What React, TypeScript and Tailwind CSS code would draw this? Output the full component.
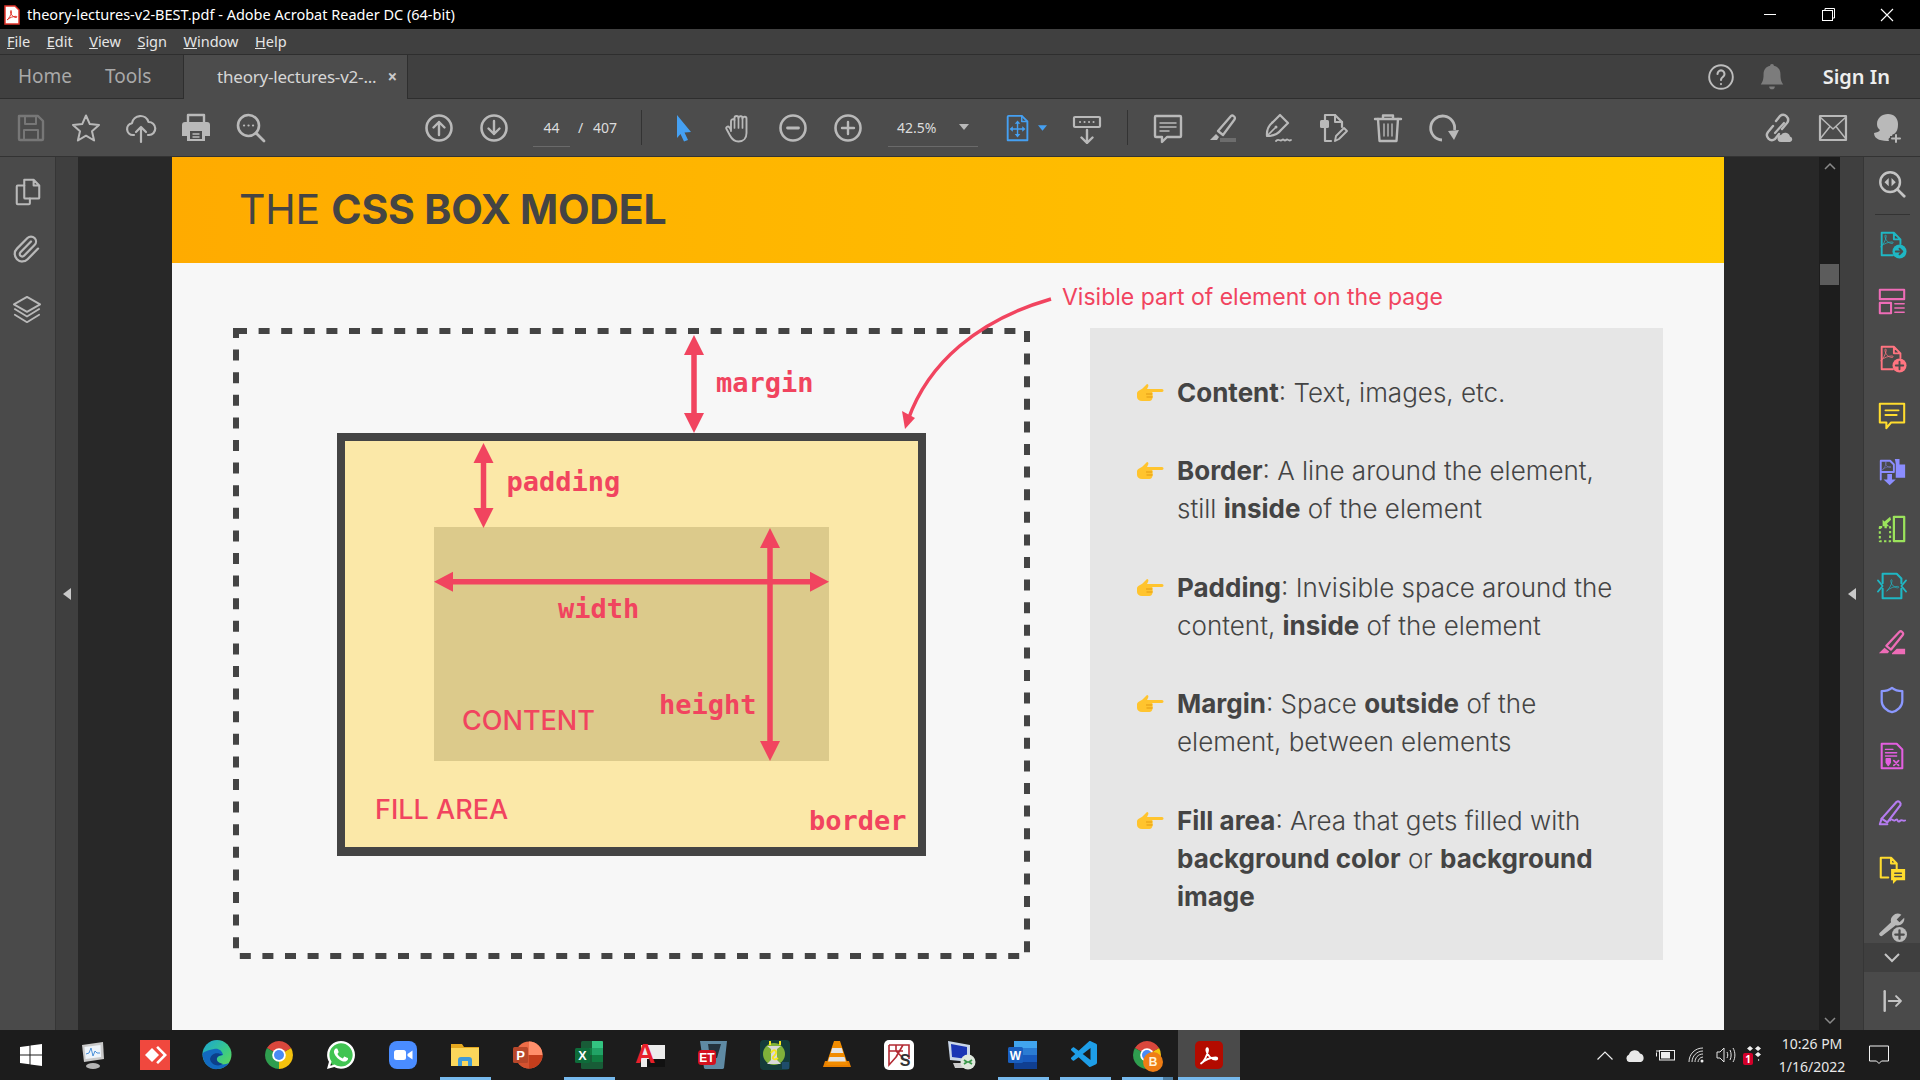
import React from "react";
import { VscVscode } from "react-icons/vsc";
import { FaWhatsapp } from "react-icons/fa";
import { Paperclip } from "lucide-react";

type P = { s?: number; className?: string; children?: React.ReactNode };
const Ic = ({ s = 32, className = "", children }: P) => (
  <svg width={s} height={s} viewBox="0 0 32 32" fill="none" stroke="currentColor" strokeWidth={2} strokeLinecap="round" strokeLinejoin="round" className={className}>
    {children}
  </svg>
);
const PDF = "M9 24.5c3-2 6.2-8 7-13 .4-3-2-3-1.6 0 .8 5 5 9 9.4 9 2 0 2-2 0-2-4.4 0-10.6 2-14.8 6z";

/* ---------- toolbar icons ---------- */
const Tb: Record<string, React.ReactNode> = {
  save: <Ic className="text-[#777]"><path d="M4 4h19l5 5v18a1 1 0 0 1-1 1H5a1 1 0 0 1-1-1z" strokeWidth={2.4} /><path d="M10 4v8h11V4M9 28V18h14v10" strokeWidth={2} /></Ic>,
  star: <Ic><path d="M16 3.5l3.8 8.6 9.2.9-7 6.2 2.1 9.3-8.1-4.8-8.1 4.8L10 19.200l-7-6.200 9.200-.9z" /></Ic>,
  cloud: <Ic><path d="M9 23H8a6 6 0 0 1-1-11.900A8.500 8.500 0 0 1 23.500 10 6.500 6.500 0 0 1 24 23h-1" strokeWidth={2.2} /><path d="M16 30V15m-5 5l5-5 5 5" strokeWidth={2.2} /></Ic>,
  print: <Ic><path d="M8 10V3h16v7" strokeWidth={2.4} /><path d="M5 10h22a3 3 0 0 1 3 3v11h-5v5H7v-5H2V13a3 3 0 0 1 3-3z" fill="currentColor" stroke="none" /><rect x="10" y="19" width="12" height="8" fill="#4b4b4b" stroke="none" /><path d="M13 22h6M13 25h6" strokeWidth={1.4} /></Ic>,
  find: <Ic><circle cx="13.500" cy="13.500" r="10.500" strokeWidth={2.6} /><path d="M21 21l8 8" strokeWidth={2.8} /><path d="M9 13.500h.1M13.500 13.500h.1M18 13.500h.1" strokeWidth={2.200} /></Ic>,
  up: <Ic><circle cx="16" cy="16" r="12.500" strokeWidth={2.6} /><path d="M16 23V10m-5.500 5.500L16 10l5.500 5.500" strokeWidth={2.4} /></Ic>,
  down: <Ic><circle cx="16" cy="16" r="12.500" strokeWidth={2.6} /><path d="M16 9v13m-5.500-5.500L16 22l5.500-5.500" strokeWidth={2.4} /></Ic>,
  cursor: <Ic className="text-[#45a0f2]"><path d="M10 3l14 17-6.500 .5 3.500 7.500-4 1.500-3.500-7.500-3.500 4z" fill="currentColor" stroke="none" /></Ic>,
  hand: <Ic><path d="M9 19V9.500a2 2 0 0 1 3.500-1.500V6a2 2 0 0 1 4 0 2 2 0 0 1 4 .5 2 2 0 0 1 4 .5v14c0 5-3 8.500-8 8.500-4 0-6.500-2-8.500-6L4.500 17c-1-2 1.500-3.500 3-1.500L9 18" strokeWidth={1.9} /><path d="M12.500 8v8M16.500 6v10M20.500 6.500V16" strokeWidth={1.700} /></Ic>,
  minus: <Ic><circle cx="16" cy="16" r="12.500" strokeWidth={2.6} /><path d="M10.500 16h11" strokeWidth={2.800} /></Ic>,
  plus: <Ic><circle cx="16" cy="16" r="12.500" strokeWidth={2.6} /><path d="M10 16h12M16 10v12" strokeWidth={2.400} /></Ic>,
  marquee: <Ic><rect x="3" y="5" width="26" height="10" rx="1" strokeWidth={2.2} /><path d="M9 10h.1M13.500 10h.1M18 10h.1M22.500 10h.1" strokeWidth={2} /><path d="M16 18v13m-5.500-5.500L16 31l5.500-5.500" strokeWidth={2.4} /></Ic>,
  comment: <Ic><path d="M4 4h24a1 1 0 0 1 1 1v19a1 1 0 0 1-1 1H15l-5 5v-5H4a1 1 0 0 1-1-1V5a1 1 0 0 1 1-1z" strokeWidth={2.4} /><path d="M8 11h16M8 15h16M8 19h9" strokeWidth={1.500} /></Ic>,
  pen: <Ic><path d="M11 19L24 4c1.500-1.500 5 1 3.500 3.500L16 23z" strokeWidth={2.3} /><path d="M9 22l3 3-2 3H3z" fill="currentColor" stroke="none" /><rect x="13" y="26" width="16" height="4" fill="#6d6d6d" stroke="none" /></Ic>,
  sign: <Ic><path d="M5 24c-.5-6 2-11 6-14l7-7 8 8-7 7c-3 4-8 6-14 6z" strokeWidth={2.2} /><path d="M5 24l8-8" strokeWidth={1.600} /><circle cx="14" cy="15" r="1.500" fill="currentColor" stroke="none" /><path d="M14 29c3-3 4 1 6-1s2 2 4 0 2 2 5 0" strokeWidth={1.800} /></Ic>,
  edit: <Ic><path d="M8 8V3h10l7 7v5" strokeWidth={2.200} /><path d="M18 3v7h7" strokeWidth={2} /><rect x="3" y="8" width="9" height="8" rx="1.500" fill="currentColor" stroke="none" /><path d="M8 16v13h6" strokeWidth={2.200} /><path d="M18 29l1-5 8-8 3 3-8 8z" strokeWidth={1.900} /></Ic>,
  trash: <Ic><path d="M3 7h26M11 7V3.500h10V7" strokeWidth={2.400} /><path d="M6 7l1.500 22h17L26 7" strokeWidth={2.400} /><path d="M12 12v12M16 12v12M20 12v12" strokeWidth={1.400} /></Ic>,
  rotate: <Ic><path d="M15 28A12 12 0 1 1 27.500 18" strokeWidth={2.800} strokeLinecap="butt" /><path d="M21 19l11-1-5 10z" fill="currentColor" stroke="none" /></Ic>,
  link: <Ic><path d="M13 21l9-10" strokeWidth={2.200} /><path d="M11 14l-5 6a5 5 0 0 0 7 7l4-5M20 17l5-6a5 5 0 0 0-7-7l-4 5" strokeWidth={2.400} /><path d="M19 30a3.500 3.500 0 0 1 0-7 5 5 0 0 1 9 1.500 2.800 2.800 0 0 1 0 5.500z" fill="currentColor" stroke="none" /></Ic>,
  mail: <Ic><rect x="3" y="4" width="26" height="24" strokeWidth={2.200} /><path d="M3 5l13 12L29 5M3 27l10-12.500M29 27L19 14.500" strokeWidth={1.500} /></Ic>,
  user: <Ic><path d="M16 2c6 0 10 4 10 10 0 5-1 8-4 10v2h-4v5c-8 0-16-1-16-8 3-1 5-1 6-3-2-2-3-3-3-6C5 6 10 2 16 2z" fill="currentColor" stroke="none" /><path d="M22 24v7M18.500 27.500h7" stroke="#4b4b4b" strokeWidth={4} /><path d="M24 23v7M20 26.500h8" strokeWidth={2} /></Ic>,
};
const FitIcon = () => (
  <Ic s={30} className="text-[#45a0f2]"><path d="M6 3h14l6 6v20H5V4a1 1 0 0 1 1-1z" strokeWidth={2} /><path d="M20 3v6h6" strokeWidth={1.6} /><path d="M15.500 10v14M9 17h13" strokeWidth={1.500} /><path d="M15.500 8l-3 3.500h6zM15.500 26l-3-3.500h6zM7 17l3.500-3v6zM24 17l-3.500-3v6z" fill="currentColor" stroke="none" /></Ic>
);

const Cell = ({ w = 55, children }: { w?: number; children: React.ReactNode }) => (
  <div className="flex shrink-0 items-center justify-center text-[#b9b9b9]" style={{ width: w }}>{children}</div>
);
const Sep = () => <div className="h-[35px] w-px shrink-0 bg-[#333]" />;

/* ---------- right rail ---------- */
const Rail: { c: string; h: number; n: React.ReactNode }[] = [
  { c: "text-[#1fb7c4]", h: 57, n: <><path d="M5 28V4h13l7 7v5M18 4v7h7M5 28h12" /><path d={PDF} strokeWidth={1} transform="translate(-3 -1) scale(.8)" /><circle cx="24" cy="24" r="7.500" fill="currentColor" stroke="none" /><path d="M20 24h7m-3-3l3 3-3 3" stroke="#4b4b4b" strokeWidth={2} /></> },
  { c: "text-[#ee6cb7]", h: 57, n: <><rect x="3" y="4" width="26" height="10" strokeWidth={2.200} /><rect x="3" y="18" width="12" height="11" strokeWidth={2.200} /><path d="M19 19h10M19 23.500h10M19 28h10" strokeWidth={1.500} /></> },
  { c: "text-[#ff7480]", h: 57, n: <><path d="M5 28V4h13l7 7v5M18 4v7h7M5 28h12" /><path d={PDF} strokeWidth={1} transform="translate(-3 -1) scale(.8)" /><circle cx="24" cy="24" r="7.500" fill="currentColor" stroke="none" /><path d="M24 20v8M20 24h8" stroke="#4b4b4b" strokeWidth={2} /></> },
  { c: "text-[#ffdc2e]", h: 57, n: <><path d="M3 4h26v20H15l-5 6v-6H3z" strokeWidth={2.200} /><path d="M9 11h14M9 16h12" strokeWidth={2} /></> },
  { c: "text-[#8b8dff]", h: 57, n: <><path d="M4 24V4h10l4 4v8H4" strokeWidth={2} /><path d="M19 2h5l6 6v14H20V7zM24 2v6h6" fill="currentColor" stroke="none" /><path d={PDF} strokeWidth={.8} transform="translate(1 0) scale(.55)" /><path d="M16 18v6h4l-6.500 6-6.500-6h4v-6z" fill="currentColor" stroke="none" /></> },
  { c: "text-[#9be35c]", h: 57, n: <><rect x="18" y="3" width="11" height="26" strokeWidth={2.400} /><path d="M3 14h11v15H3z" strokeWidth={2.200} strokeDasharray="2.500 2.500" strokeLinecap="butt" /><path d="M14 3L8 8l-2-2v7h7l-2.500-2.500L15 6z" fill="currentColor" stroke="none" /></> },
  { c: "text-[#1fb7c4]", h: 57, n: <><path d="M6 3h15l5 5v5M26 19v10H6V19M6 13V3" strokeWidth={2.200} /><path d="M1 10l5 6-5 6M31 10l-5 6 5 6" strokeWidth={1.800} /><path d={PDF} strokeWidth={1} transform="translate(3.500 2) scale(.78)" /></> },
  { c: "text-[#ee6cb7]", h: 57, n: <><path d="M10 19L24 4c1.500-1.500 5 1 3.500 3.500L15 23z" strokeWidth={2.400} /><path d="M8 21l5 4-1.500 2H2z" fill="currentColor" stroke="none" /><path d="M16 27l5-5h9v6H16z" fill="currentColor" stroke="none" /></> },
  { c: "text-[#8b98ff]", h: 57, n: <><path d="M16 3c3 2.500 7 3.500 11 3.500V17c0 6-5 10.500-11 12C10 27.500 5 23 5 17V6.500C9 6.500 13 5.500 16 3z" strokeWidth={2.400} /></> },
  { c: "text-[#e35fe0]", h: 56, n: <><path d="M5 3h16l6 6v20H5z" strokeWidth={2.200} /><path d="M9 9h8M9 12.500h12M9 16h12" strokeWidth={1.400} /><path d="M10 19h4v4l-2 3-2-3zM18 21l5 5M23 21l-5 5" strokeWidth={1.800} fill="currentColor" /></> },
  { c: "text-[#b57cf0]", h: 57, n: <><path d="M5 22L21 4c2-1.500 5 1 4 3.500L11 26z" strokeWidth={2.300} /><path d="M5 22l-2 6h8" strokeWidth={2.200} /><path d="M14 24c2-3 3 1 5 0s2-2 3 0 2 1 3 0 3 1 5 0" strokeWidth={2} /></> },
  { c: "text-[#ffdc2e]", h: 57, n: <><path d="M12 24H4V3h11l6 6v6M15 3v6h6" strokeWidth={2.200} /><path d="M15 15h15v12h-9l-4 4v-4h-2z" fill="currentColor" stroke="none" /><path d="M19 19.500h7M19 23h7" stroke="#4b4b4b" strokeWidth={1.600} /></> },
  { c: "text-[#b9b9b9]", h: 57, n: <><path d="M17 4a7 7 0 0 1 9-1l-5 5 3 3 5-5a7 7 0 0 1-9 8L6 25a2 2 0 0 1-3-3l12-11a7 7 0 0 1 2-7z" fill="currentColor" stroke="none" /><circle cx="24" cy="24" r="8" fill="currentColor" stroke="none" /><path d="M24 19.500v9M19.500 24h9" stroke="#4b4b4b" strokeWidth={2.400} /></> },
];

/* ---------- taskbar icons ---------- */
const Chrome = () => (
  <g>
    <path d="M16 16L3.900 9A14 14 0 0 1 28.100 9z" fill="#d9473c" />
    <path d="M16 16L28.100 9A14 14 0 0 1 16 30z" fill="#f4c20d" />
    <path d="M16 16L16 30A14 14 0 0 1 3.900 9z" fill="#2f9e4f" />
    <circle cx="16" cy="16" r="6.800" fill="#fff" />
    <circle cx="16" cy="16" r="5" fill="#4a8af4" />
  </g>
);
const Tx = ({ x, y, size, fill = "#fff", children }: { x: number; y: number; size: number; fill?: string; children: string }) => (
  <text x={x} y={y} fontSize={size} fontWeight={700} fill={fill} textAnchor="middle" fontFamily="'Liberation Sans', sans-serif">{children}</text>
);
const S = ({ children }: { children: React.ReactNode }) => <svg width="32" height="32" viewBox="0 0 32 32">{children}</svg>;
const Tasks: { n: React.ReactNode; u?: number | "a" }[] = [
  { n: <svg width="22" height="22" viewBox="0 0 22 22" fill="#fff"><path d="M0 3l9.500-1.300V10.500H0zM10.500 1.500L22 0v10.500H10.500zM0 11.500h9.500v8.800L0 19zM10.500 11.500H22V22l-11.500-1.600z" /></svg> },
  { n: <S><path d="M5 6l21-3 1 17-20 3z" fill="#c9c9c9" /><path d="M7.500 8l16-2 .6 12-15.500 2z" fill="#eef4fa" /><path d="M9 15l3-1 2-5 2 8 2-5 2 2h3" stroke="#4a90d9" strokeWidth={1} fill="none" /><ellipse cx="16" cy="27" rx="7" ry="3" fill="#b5b5b5" /></S> },
  { n: <S><rect x="1" y="1" width="30" height="30" fill="#f0483e" /><path d="M13 9l7 7-7 7-7-7z" fill="#fff" /><path d="M19 7l9 9-9 9-1.800-1.800 7.200-7.200-7.200-7.200z" fill="#fff" /></S> },
  { n: <S><defs><linearGradient id="eg" x1="0" y1="0" x2="1" y2="1"><stop offset="0" stopColor="#1aa3d8" /><stop offset=".55" stopColor="#38c98a" /><stop offset="1" stopColor="#67d84f" /></linearGradient></defs><circle cx="16" cy="15.500" r="14.500" fill="url(#eg)" /><path d="M1.500 15C2 26 10 31 17 30c5-.5 9-3 11-6-4 2-10 2-12-1-2-4 2-7 6-7-1-5-5-7-9-6-6 1-11 3-11.500 5z" fill="#1269c0" /><path d="M9 20c1-5 6-8 13-4 0 0-5 0-6 3s2 5 6 6c-5 3-12 1-13-5z" fill="#0c3f8a" /></S> },
  { n: <S><Chrome /></S> },
  { n: <div className="relative flex h-8 w-8 items-center justify-center"><div className="absolute h-[26px] w-[26px] rounded-full bg-[#41c452]" /><FaWhatsapp size={32} color="#fff" className="relative" /></div> },
  { n: <S><rect x="2" y="2" width="28" height="28" rx="8" fill="#4a8cff" /><rect x="7" y="11" width="12" height="10" rx="2.500" fill="#fff" /><path d="M20.500 15l5-3.500v9l-5-3.500z" fill="#fff" /></S> },
  { n: <S><path d="M2 5h11l2 3h15v19H2z" fill="#e5a81f" /><path d="M2 9h28v18H2z" fill="#fbd75b" /><path d="M9 27v-6a3 3 0 0 1 3-3h8a3 3 0 0 1 3 3v6h-4v-5h-6v5z" fill="#3e9ad8" /></S>, u: 1 },
  { n: <S><circle cx="18" cy="16" r="13.500" fill="#ed6c47" /><path d="M18 16h13.500a13.500 13.500 0 0 1-13.500 13.500z" fill="#c43e1c" /><path d="M18 16h-13.500a13.500 13.500 0 0 0 13.500 13.500z" fill="#d35230" /><path d="M18 2.500a13.500 13.500 0 0 1 13.500 13.500H18z" fill="#ff8f6b" /><rect x="2" y="8" width="15" height="16" rx="1.500" fill="#b7472a" /><Tx x={9.500} y={21} size={13}>P</Tx></S> },
  { n: <S><rect x="8" y="2" width="22" height="28" rx="1.500" fill="#185c37" /><path d="M19 2h10a1 1 0 0 1 1 1v6H19z" fill="#33c481" /><rect x="19" y="9" width="11" height="7" fill="#21a366" /><rect x="8" y="9" width="11" height="7" fill="#107c41" /><rect x="19" y="16" width="11" height="7" fill="#107c41" /><rect x="2" y="9" width="15" height="15" rx="1.500" fill="#0e6c3a" /><Tx x={9.500} y={21} size={12.500}>X</Tx></S>, u: 1 },
  { n: <S><path d="M6 6h24v22H6z" fill="#ececec" /><path d="M12 20h18v8H12z" fill="#111" /><Tx x={10} y={24} size={28} fill="#e8202a">A</Tx></S> },
  { n: <S><path d="M3 2h27l-3 27a2 2 0 0 1-2 1H9a2 2 0 0 1-2-1z" fill="#5f8aa3" /><path d="M11 5h13l-4 14h-7z" fill="#24333d" /><rect x="1" y="11" width="18" height="15" rx="3.500" fill="#d4121f" /><Tx x={10} y={23} size={12}>ET</Tx></S> },
  { n: <S><rect x="1" y="1" width="30" height="30" rx="4" fill="#143c3a" /><circle cx="15" cy="15" r="11" fill="#7fb23a" /><path d="M8 7h14l-4 3v11l4 4H8l4-4V10z" fill="#d9d9d9" /><path d="M12 14c3-6 8-1 3 3-3 2 0 5 4 2" stroke="#f6e71c" strokeWidth={1.800} fill="none" /><path d="M11 2v4M21 2v4" stroke="#f6e71c" strokeWidth={2} /><rect x="23" y="23" width="7" height="7" fill="#1f4d6b" /></S> },
  { n: <S><path d="M2 28h28l-2-6H4z" fill="#e98000" /><path d="M13 2h6l8 24H5z" fill="#f28c00" /><path d="M11.200 9h9.600l1.400 5h-12.400zM8.500 18h15l1.300 4.500H7z" fill="#e4e4e4" /></S> },
  { n: <S><rect x="1" y="1" width="30" height="30" rx="5" fill="#fff" /><path d="M6 6h20v14M6 6v20l8-9M6 12h14M13 6v6l7 7M20 6l-7 12" stroke="#b22a33" strokeWidth={1.600} fill="none" /><Tx x={22} y={27} size={16} fill="#333">S</Tx></S> },
  { n: <S><path d="M3 2l22 4v17L5 21z" fill="#c9d6e8" /><path d="M6 5l16 3v12L7 18z" fill="#1a35b5" /><path d="M8 24h12l4 3-2 2H10z" fill="#ccc" /><circle cx="23" cy="23" r="7.500" fill="#dfe8dd" /><path d="M19 21l3 2-3 2M27 21l-3 2 3 2" stroke="#3a9a4a" strokeWidth={1.800} fill="none" /></S> },
  { n: <S><rect x="7" y="2" width="23" height="28" rx="1.500" fill="#185abd" /><rect x="7" y="2" width="23" height="7" fill="#41a5ee" /><rect x="7" y="9" width="23" height="7" fill="#2b7cd3" /><rect x="7" y="23" width="23" height="7" fill="#103f91" /><rect x="1" y="8" width="15" height="16" rx="1.500" fill="#1a5fbf" /><Tx x={8.500} y={21} size={12}>W</Tx></S>, u: 1 },
  { n: <VscVscode size={32} color="#1e9ee8" />, u: 1 },
  { n: <div className="relative h-8 w-8"><S><Chrome /></S><div className="absolute left-[12px] top-[13px] flex h-[20px] w-[20px] items-center justify-center rounded-full bg-[#ef7d14] text-[12px] font-bold text-[#fff2d8] font-['Liberation_Sans',sans-serif]">B</div></div>, u: 2 },
  { n: <S><rect x="2" y="2" width="28" height="28" rx="5" fill="#b30b00" /><path d={PDF} fill="none" stroke="#fff" strokeWidth={1.800} strokeLinejoin="round" transform="translate(-1 0)" /></S>, u: "a" },
];

const Hand = () => (
  <svg width="28" height="18" viewBox="0 0 28 18" className="mt-[10px] shrink-0">
    <path d="M1 9c1-3 4-3 6-5l4-4c1 0 2 1 1 3l-1 2h15c2 0 2 3 0 3H16c1 1 1 2 .5 3 .5 1 .5 2 0 3-.5 2-1.500 3-3 3H6c-3 0-5-2-5-4z" fill="#ffc42e" />
    <path d="M10 10h6M10.500 13h6" stroke="#e29a12" strokeWidth={1} fill="none" />
  </svg>
);

const Item = ({ children }: { children: React.ReactNode }) => (
  <div className="flex gap-[13px]"><Hand /><p className="m-0">{children}</p></div>
);

const pink = "#f1445f";

export default function App() {
  return (
    <div className="flex h-[1080px] w-[1920px] flex-col overflow-hidden bg-[#282828] font-['Noto_Sans',sans-serif] text-white">
      {/* title bar */}
      <div className="flex h-[29px] shrink-0 items-center bg-black pl-[4px]">
        <svg width="16" height="20" viewBox="0 0 16 20"><path d="M1 1h10l4 4v14H1z" fill="#fff" stroke="#e2342b" strokeWidth={1.500} /><path d="M3 15c2-1.500 4-5 4.500-8 .2-2-1.200-2-1 0 .5 3 3 5.500 5.500 5.500 1.300 0 1.300-1.200 0-1.200-2.500 0-6.500 1.200-9 3.700z" fill="none" stroke="#e2342b" strokeWidth={1} /></svg>
        <span className="ml-[7px] text-[14.500px] leading-none">theory-lectures-v2-BEST.pdf - Adobe Acrobat Reader DC (64-bit)</span>
        <div className="ml-auto flex items-center pr-[3px]">
          <div className="flex w-[59px] justify-center"><div className="h-px w-[12px] bg-white" /></div>
          <div className="flex w-[59px] justify-center"><svg width="13" height="13" viewBox="0 0 13 13" fill="none" stroke="#fff"><rect x=".5" y="2.500" width="10" height="10" /><path d="M3 2.500V.5h9.500V10h-2" /></svg></div>
          <div className="flex w-[59px] justify-center pr-[2px]"><svg width="14" height="14" viewBox="0 0 14 14" stroke="#fff" strokeWidth={1.100}><path d="M1 1l12 12M13 1L1 13" /></svg></div>
        </div>
      </div>
      {/* menu */}
      <div className="flex h-[26px] shrink-0 items-center gap-[16.500px] border-b border-[#2e2e2e] bg-[#404040] pl-[7px] text-[14.500px] text-[#e6e6e6]">
        {["File", "Edit", "View", "Sign", "Window", "Help"].map((m) => (
          <span key={m}><span className="underline">{m[0]}</span>{m.slice(1)}</span>
        ))}
      </div>
      {/* tabs */}
      <div className="flex h-[44px] shrink-0 items-stretch border-b border-[#2e2e2e] bg-[#404040]">
        <div className="flex w-[184px] items-center gap-[33px] border-r border-[#2e2e2e] pl-[18px] text-[19px] text-[#a9a9a9]">
          <span>Home</span><span>Tools</span>
        </div>
        <div className="-mb-px flex w-[224px] items-center border-r border-[#2e2e2e] bg-[#4c4c4c] pl-[33px] text-[17px] text-[#d6d6d6]">
          <span className="tracking-[-0.2px]">theory-lectures-v2-...</span>
          <span className="ml-[11px] text-[17px] font-bold text-[#c9c9c9]">×</span>
        </div>
        <div className="ml-auto flex items-center pr-[30px]">
          <span className="text-[#bdbdbd]"><Ic s={28}><circle cx="16" cy="16" r="13.500" strokeWidth={2.200} /><path d="M12 12.500a4 4 0 1 1 6 3.500c-1.500 1-2 1.500-2 3.500M16 24v.1" strokeWidth={2.400} /></Ic></span>
          <span className="ml-[22px] mr-[36px] text-[#7c7c7c]"><Ic s={30}><path d="M16 2c1.500 0 2 1 2 2 5 1 7 5 7 9 0 6 1 8 3 11H4c2-3 3-5 3-11 0-4 2-8 7-9 0-1 .5-2 2-2zM13 26h6a3 3 0 0 1-6 0z" fill="currentColor" stroke="none" /></Ic></span>
          <span className="text-[20px] font-semibold text-[#eee]">Sign In</span>
        </div>
      </div>
      {/* toolbar */}
      <div className="flex h-[58px] shrink-0 items-center border-b border-[#333] bg-[#4c4c4c] pl-[3px]">
        <Cell>{Tb.save}</Cell><Cell>{Tb.star}</Cell><Cell>{Tb.cloud}</Cell><Cell>{Tb.print}</Cell><Cell>{Tb.find}</Cell>
        <div className="w-[133px] shrink-0" />
        <Cell>{Tb.up}</Cell><Cell>{Tb.down}</Cell>
        <div className="relative ml-[12px] w-[37px] shrink-0 border-b border-[#6a6a6a] py-[8px] text-center text-[14px] text-[#dcdcdc]">44</div>
        <span className="ml-[8px] w-[14px] text-[14px] text-[#dcdcdc]">/</span>
        <span className="ml-[1px] text-[14px] text-[#dcdcdc]">407</span>
        <div className="ml-[24px]"><Sep /></div>
        <div className="ml-[13px] flex"><Cell>{Tb.cursor}</Cell><Cell>{Tb.hand}</Cell><Cell>{Tb.minus}</Cell><Cell>{Tb.plus}</Cell></div>
        <div className="ml-[13px] flex w-[90px] shrink-0 items-center border-b border-[#6a6a6a] py-[8px] pl-[9px] text-[14px] text-[#dcdcdc]">
          <span>42.5%</span>
          <svg width="10" height="6" className="ml-auto mr-[9px] text-[#b9b9b9]" viewBox="0 0 10 6" fill="currentColor"><path d="M0 0h10L5 6z" /></svg>
        </div>
        <div className="ml-[25px] flex items-center"><FitIcon />
          <svg width="9" height="6" className="ml-[5px] text-[#45a0f2]" viewBox="0 0 10 6" fill="currentColor"><path d="M0 0h10L5 6z" /></svg></div>
        <div className="ml-[18px]"><Cell w={44}>{Tb.marquee}</Cell></div>
        <div className="ml-[18px]"><Sep /></div>
        <div className="ml-[12px] flex"><Cell>{Tb.comment}</Cell><Cell>{Tb.pen}</Cell><Cell>{Tb.sign}</Cell><Cell>{Tb.edit}</Cell><Cell>{Tb.trash}</Cell><Cell>{Tb.rotate}</Cell></div>
        <div className="ml-auto flex pr-[5px]"><Cell>{Tb.link}</Cell><Cell>{Tb.mail}</Cell><Cell>{Tb.user}</Cell></div>
      </div>
      {/* main */}
      <div className="flex min-h-0 flex-1">
        <div className="flex w-[56px] shrink-0 flex-col items-center border-r border-[#363636] bg-[#4a4a4a] pt-[20px] text-[#b9b9b9]">
          <Ic s={30}><path d="M12 3h10l6 6v13a1 1 0 0 1-1 1H13a1 1 0 0 1-1-1zM22 3v6h6" strokeWidth={2.200} /><path d="M12 9H5a1 1 0 0 0-1 1v18a1 1 0 0 0 1 1h12a1 1 0 0 0 1-1v-5" strokeWidth={2.200} /></Ic>
          <div className="mt-[27px] -ml-[3px]"><Paperclip size={30} strokeWidth={1.800} /></div>
          <div className="mt-[31px] -ml-[2px]"><Ic s={30}><path d="M16 2l14 8-14 8-14-8z" strokeWidth={1.900} /><path d="M3 15l13 8 13-8M3 21l13 8 13-8" strokeWidth={1.900} /></Ic></div>
        </div>
        <div className="flex w-[22px] shrink-0 items-center justify-center bg-[#3f3f3f]">
          <svg width="8" height="12" viewBox="0 0 8 12" fill="#c9c9c9"><path d="M8 0v12L0 6z" /></svg>
        </div>
        <div className="w-[94px] shrink-0 bg-[#282828]" />
        {/* page */}
        <div className="flex w-[1552px] shrink-0 flex-col bg-[#f7f7f7] font-['Inter',sans-serif]">
          <div className="flex h-[106px] shrink-0 items-center bg-gradient-to-r from-[#ffab00] to-[#ffc800] pl-[67px] text-[41px] tracking-[-0.2px] text-[#444]">
            <span>THE&nbsp;<b>CSS BOX MODEL</b></span>
          </div>
          <div className="flex items-start pl-[61px] pt-[65px]">
            {/* diagram: a free canvas */}
            <div className="relative h-[632px] w-[797px] shrink-0" style={{ color: pink }}>
              <div className="absolute left-[104px] top-[105px] h-[423px] w-[589px] border-[8px] border-b-[9px] border-[#444] bg-[#fbe8a8]">
                <div className="absolute left-[89px] top-[86px] h-[234px] w-[395px] bg-[#dcca8b]" />
              </div>
              <svg className="absolute left-0 top-0 overflow-visible" width="797" height="631" fill="none">
                <rect x="3" y="3" width="791" height="625" stroke="#444" strokeWidth={6} strokeDasharray="11 11.6" />
                <g stroke={pink} strokeWidth={5.500}>
                  <path d="M461 25v62M250.500 133v49M219 253.700h359M537 218v196" />
                </g>
                <g fill={pink}>
                  <path d="M461 7l10 20h-20zM461 105l10-20h-20zM250.500 115l10 20h-20zM250.500 200l10-20h-20zM201 253.700l19-10v20zM596 253.700l-19-10v20zM537 200l10 20h-20zM537 433l10-20h-20z" />
                  <path d="M672 101l-3-18 13 7z" />
                </g>
                <path d="M818 -29C745 -8 695 35 675 92" stroke={pink} strokeWidth={3.500} />
              </svg>
              <div className="absolute left-[829px] top-[-48px] whitespace-nowrap text-[23px] leading-[34px]">Visible part of element on the page</div>
              {[
                ["margin", 483, 36],
                ["padding", 273.500, 135],
                ["width", 325, 262],
                ["height", 426, 358],
                ["border", 576, 474],
              ].map(([t, l, tp]) => (
                <span key={t as string} className="absolute text-[27px] font-bold leading-[38px] font-['DejaVu_Sans_Mono',monospace]" style={{ left: l as number, top: tp as number }}>{t}</span>
              ))}
              <span className="absolute left-[229px] top-[374px] text-[27px] font-medium leading-[38px]">CONTENT</span>
              <span className="absolute left-[142px] top-[463px] text-[27px] font-medium leading-[38px]">FILL AREA</span>
            </div>
            {/* panel */}
            <div className="ml-[60px] flex h-[632px] w-[573px] shrink-0 flex-col gap-[40.4px] bg-[#e6e6e6] pl-[46px] pr-[30px] pt-[46px] text-[26px] font-light leading-[38px] text-[#444]">
              <Item><b className="font-bold">Content</b>: Text, images, etc.</Item>
              <Item><b className="font-bold">Border</b>: A line around the element, still <b className="font-bold">inside</b> of the element</Item>
              <Item><b className="font-bold">Padding</b>: Invisible space around the content, <b className="font-bold">inside</b> of the element</Item>
              <Item><b className="font-bold">Margin</b>: Space <b className="font-bold">outside</b> of the element, between elements</Item>
              <Item><b className="font-bold">Fill area</b>: Area that gets filled with <b className="font-bold">background color</b> or <b className="font-bold">background image</b></Item>
            </div>
          </div>
        </div>
        <div className="w-[95px] shrink-0 bg-[#282828]" />
        {/* scrollbar */}
        <div className="flex w-[21px] shrink-0 flex-col items-center bg-[#1d1d1d] py-[5px] text-[#8a8a8a]">
          <svg width="12" height="8" viewBox="0 0 12 8" fill="none" stroke="currentColor" strokeWidth={1.500}><path d="M1 7l5-5 5 5" /></svg>
          <div className="mt-[94px] h-[21px] w-[19px] bg-[#5c5c5c]" />
          <svg width="12" height="8" className="mt-auto" viewBox="0 0 12 8" fill="none" stroke="currentColor" strokeWidth={1.500}><path d="M1 1l5 5 5-5" /></svg>
        </div>
        <div className="flex w-[23px] shrink-0 items-center justify-center bg-[#3f3f3f]">
          <svg width="8" height="12" viewBox="0 0 8 12" fill="#c9c9c9"><path d="M8 0v12L0 6z" /></svg>
        </div>
        {/* right rail */}
        <div className="flex w-[57px] shrink-0 flex-col items-center border-l border-[#363636] bg-[#4a4a4a] pt-[12px]">
          <span className="block h-[30px] text-[#c4c4c4]"><Ic s={30}><circle cx="14" cy="14" r="10.500" strokeWidth={2.600} /><path d="M22 22l7 7" strokeWidth={3} /><path d="M12.500 9.500v9l-4.500-4.500zM15.500 9.500v9l4.500-4.500z" fill="currentColor" stroke="none" /></Ic></span>
          <div className="mt-[15px] h-px w-[35px] shrink-0 bg-[#333]" />
          {Rail.map((r, i) => (
            <div key={i} className={`flex w-full shrink-0 items-center justify-center ${r.c}`} style={{ height: r.h }}>
              <Ic s={30}>{r.n}</Ic>
            </div>
          ))}
          <div className="-mt-[12px] flex h-[29px] w-full shrink-0 items-center justify-center bg-[#3f3f3f] text-[#c4c4c4]">
            <svg width="16" height="10" viewBox="0 0 16 10" fill="none" stroke="currentColor" strokeWidth={2}><path d="M1 1l7 7 7-7" /></svg>
          </div>
          <div className="mt-[16px] text-[#c4c4c4]"><Ic s={26}><path d="M7 4v24" strokeWidth={3} /><path d="M12 16h15m-6-6l6 6-6 6" strokeWidth={2.400} /></Ic></div>
        </div>
      </div>
      {/* taskbar */}
      <div className="flex h-[50px] shrink-0 items-stretch bg-[#1c1c1c]">
        {Tasks.map((t, i) => (
          <div key={i} className={`relative flex w-[62px] shrink-0 items-center justify-center ${t.u === "a" ? "bg-[#4a4a4a]" : ""}`}>
            {t.n}
            {t.u === "a" && <div className="absolute bottom-0 left-0 right-0 h-[3px] bg-[#76b9ed]" />}
            {(t.u === 1 || t.u === 2) && <div className="absolute bottom-0 left-[5.500px] right-[5.500px] h-[3px] bg-[#76b9ed]" />}
            {t.u === 2 && <div className="absolute bottom-0 right-[5.500px] h-[3px] w-[10px] bg-[#4d7ea3]" />}
          </div>
        ))}
        <div className="ml-auto flex items-center pr-[18px] text-white">
          <div className="flex w-[30px] justify-center"><svg width="16" height="9" viewBox="0 0 16 9" fill="none" stroke="#eee" strokeWidth={1.200}><path d="M.5 8.500L8 1l7.500 7.500" /></svg></div>
          <div className="flex w-[30px] justify-center"><svg width="20" height="13" viewBox="0 0 20 13" fill="#e8e8e8"><path d="M4 13a4 4 0 0 1 0-7.500A6 6 0 0 1 15 4.500a4.500 4.500 0 0 1 1 8.500z" /></svg></div>
          <div className="flex w-[31px] justify-center"><svg width="20" height="14" viewBox="0 0 20 14" fill="none" stroke="#eee"><rect x="3.500" y="2.500" width="15" height="9.500" strokeWidth={1} /><rect x="5" y="4" width="9" height="6.500" fill="#eee" stroke="none" /><path d="M.5 4.500v4M3 2v2M1 2v2" strokeWidth={1} /></svg></div>
          <div className="flex w-[30px] justify-center"><svg width="16" height="16" viewBox="0 0 16 16" fill="none" stroke="#ddd" strokeWidth={1}><path d="M1 15C1 7 7 1 15 1M4 15c0-6 5-11 11-11M7 15c0-4 3-8 8-8M10 15c0-2 2-5 5-5" /><circle cx="14" cy="14" r="1.500" fill="#eee" stroke="none" /></svg></div>
          <div className="flex w-[29px] justify-center"><svg width="20" height="18" viewBox="0 0 20 18" fill="none" stroke="#e4e4e4"><path d="M1 6h3l4-4v14l-4-4H1zM11 6c1 2 1 4 0 6M14 4c1.500 3 1.500 7 0 10M17 2c2.500 4 2.500 10 0 14" strokeWidth={1} /></svg></div>
          <div className="relative flex w-[28px] justify-center"><svg width="20" height="20" viewBox="0 0 20 20" fill="#eee"><path d="M6 1l3 2.500L6 6 3 3.500zM14 1l3 2.500L14 6l-3-2.500zM14 7l3 2.500-3 2.500-3-2.500zM14 14l1.500 1-1.500 1z" /></svg><div className="absolute left-[3px] top-[8px] flex h-[12px] w-[10px] items-center justify-center rounded-[2px] bg-[#d4002a] text-[10px] font-bold leading-none">1</div></div>
          <div className="flex w-[88px] flex-col items-center text-[14px] leading-[23px] text-[#e8e8e8]"><span>10:26 PM</span><span>1/16/2022</span></div>
          <div className="flex w-[46px] justify-center"><svg width="20" height="20" viewBox="0 0 20 20" fill="none" stroke="#f2f2f2"><path d="M.5 1h19v15h-7l-2.500 2.500L7.500 16h-7z" /></svg></div>
        </div>
      </div>
    </div>
  );
}
